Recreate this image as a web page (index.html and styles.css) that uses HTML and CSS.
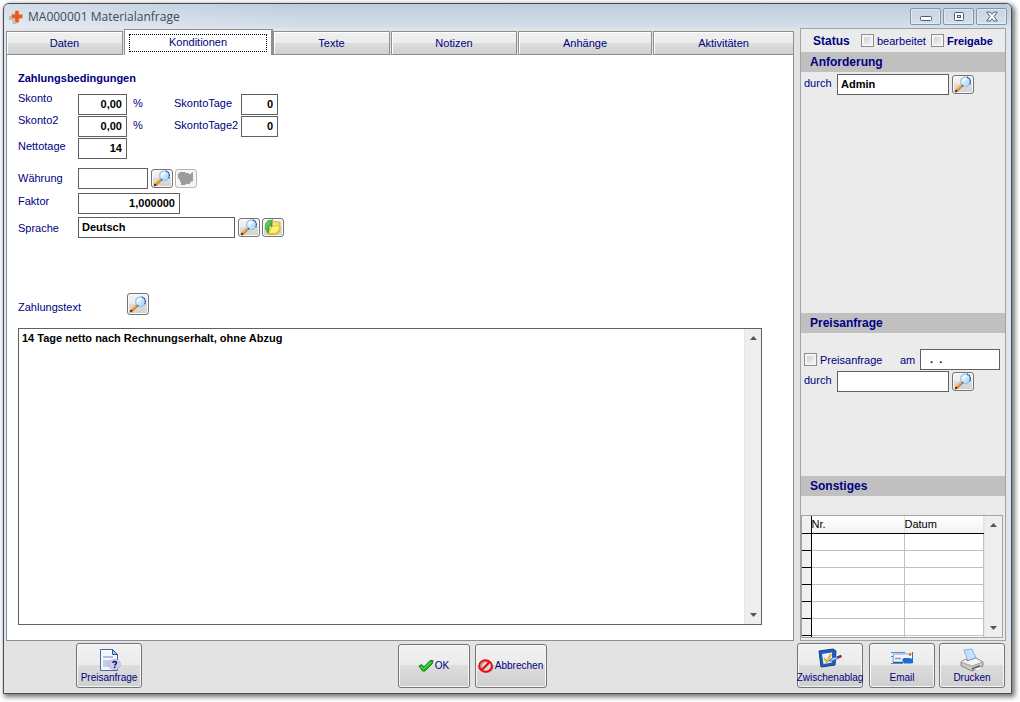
FILE: index.html
```html
<!DOCTYPE html>
<html lang="de">
<head>
<meta charset="utf-8">
<title>MA000001 Materialanfrage</title>
<link rel="stylesheet" href="styles.css">
</head>
<body>
<svg class="defs" aria-hidden="true">
  <defs>
    <linearGradient id="glass" x1="0" y1="0" x2="1" y2="1"><stop offset="0" stop-color="#fff"/><stop offset="1" stop-color="#8fd3f8"/></linearGradient>
    <linearGradient id="leaf" x1="0" y1="0" x2="1" y2="1"><stop offset="0" stop-color="#7be36b"/><stop offset="1" stop-color="#178f1c"/></linearGradient>
    <linearGradient id="gold" x1="0" y1="0" x2="1" y2="1"><stop offset="0" stop-color="#fff9a8"/><stop offset="1" stop-color="#f0c420"/></linearGradient>
    <symbol id="search" viewBox="0 0 18 17">
      <path d="M2.200 15 8 9.400" stroke="#c8702a" stroke-width="2.800" stroke-linecap="round"/>
      <path d="M2.600 14 7.600 9.200" stroke="#ffb23c" stroke-width="1.600"/>
      <path d="M1.400 15.600 2.800 14.400" stroke="#3a2410" stroke-width="1.800"/>
      <circle cx="11.500" cy="5.700" r="4.900" fill="url(#glass)" stroke="#9cc0e4" stroke-width="1.200"/>
      <path d="M13 1.100a4.900 4.900 0 0 1 2.400 7.600M8 9.200l1.600.9" fill="none" stroke="#27408f" stroke-width="1.200" stroke-dasharray="1.500 .8"/>
      <path d="M9.500 5.500c.2-1.500 1.300-2.400 2.800-2.400" fill="none" stroke="#fff" stroke-width="1.400"/>
    </symbol>
  </defs>
</svg>
<div class="window">
  <header class="titlebar">
    <svg class="app-icon" viewBox="0 0 14 14"><path d="M3.500 3h4v3h4v4h-4v4h-4v-4H0V6h3.500z" fill="#b9bec4"/><path d="M6 .5h4v3.700h3.700v4.300H10v4.200H6V8.500H2.500V4.200H6z" fill="#e8591c" stroke="#fbd0b6" stroke-width=".5"/></svg>
    <h1 class="title">MA000001 Materialanfrage</h1>
    <div class="window-controls">
      <button type="button" class="win-btn" aria-label="Minimieren"><svg viewBox="0 0 12 11"><rect x=".5" y="5.500" width="11" height="4" rx="1" fill="#fff" stroke="#555a62"/></svg></button>
      <button type="button" class="win-btn" aria-label="Maximieren"><svg viewBox="0 0 12 11"><rect x="1.500" y="1.500" width="9" height="8" rx="1" fill="#fff" stroke="#555a62"/><rect x="4.500" y="4.500" width="3" height="2" fill="#dce5ef" stroke="#555a62"/></svg></button>
      <button type="button" class="win-btn" aria-label="Schließen"><svg viewBox="0 0 12 11"><path d="M.8 1h3.400L6 3.200 7.800 1h3.400L8 5.500l3.200 4.500H7.800L6 7.800 4.200 10H.8L4 5.500z" fill="#fff" stroke="#555a62"/></svg></button>
    </div>
  </header>

  <div class="workspace">
    <main class="main">
      <div class="tabs" role="tablist">
        <button type="button" role="tab" class="tab">Daten</button>
        <button type="button" role="tab" class="tab tab-active" aria-selected="true"><span class="tab-focus">Konditionen</span></button>
        <button type="button" role="tab" class="tab">Texte</button>
        <button type="button" role="tab" class="tab">Notizen</button>
        <button type="button" role="tab" class="tab">Anhänge</button>
        <button type="button" role="tab" class="tab">Aktivitäten</button>
      </div>
      <section class="panel">
        <h2 class="heading">Zahlungsbedingungen</h2>
        <div class="group">
          <div class="row">
            <label class="label raised" for="skonto">Skonto</label>
            <input class="field num w-small" id="skonto" value="0,00">
            <span class="unit">%</span>
            <label class="label-days" for="tage">SkontoTage</label>
            <input class="field num w-days" id="tage" value="0">
          </div>
          <div class="row">
            <label class="label raised" for="skonto2">Skonto2</label>
            <input class="field num w-small" id="skonto2" value="0,00">
            <span class="unit">%</span>
            <label class="label-days" for="tage2">SkontoTage2</label>
            <input class="field num w-days" id="tage2" value="0">
          </div>
          <div class="row">
            <label class="label lifted" for="netto">Nettotage</label>
            <input class="field num w-small" id="netto" value="14">
          </div>
        </div>
        <div class="group group-wide">
          <div class="row">
            <label class="label level" for="waehrung">Währung</label>
            <input class="field w-currency" id="waehrung">
            <button type="button" class="icon-btn" aria-label="Währung suchen"><svg><use href="#search"/></svg></button>
            <button type="button" class="icon-btn" disabled aria-label="Währung übernehmen"><svg viewBox="0 0 18 17"><path d="M3 2h5l1 1h5l2-1v9l-3 1v2H9l-1 1H4v-3H3v-2L1 8V4z" fill="#9c9c9c"/><path d="M9 2.500h2M12 3.500h2M13 1.500h2" stroke="#fff"/></svg></button>
          </div>
          <div class="row">
            <label class="label lifted" for="faktor">Faktor</label>
            <input class="field num w-factor" id="faktor" value="1,000000">
          </div>
        </div>
        <div class="group group-near">
          <div class="row">
            <label class="label" for="sprache">Sprache</label>
            <input class="field w-language" id="sprache" value="Deutsch">
            <button type="button" class="icon-btn" aria-label="Sprache suchen"><svg><use href="#search"/></svg></button>
            <button type="button" class="icon-btn" aria-label="Sprache übernehmen"><svg viewBox="0 0 18 17"><path d="M8 4l3-2 1 1h4v9l-3 3-9 .5L3 11z" fill="url(#gold)" stroke="#c9a21a" stroke-width=".8"/><path d="M5 14.500 8 7h6l2 1-3 6z" fill="#fff27a" stroke="#d8b222" stroke-width=".6"/><path d="M9 1 4 1.500 1.500 5v5L4 14l1-3V7l1-1 2 2V1z" fill="url(#leaf)" stroke="#1c8a22" stroke-width=".6"/></svg></button>
          </div>
        </div>
        <div class="text-head">
          <label class="text-label" for="zahlungstext">Zahlungstext</label>
          <button type="button" class="icon-btn icon-btn-tall" aria-label="Zahlungstext suchen"><svg><use href="#search"/></svg></button>
        </div>
        <div class="memo">
          <textarea class="memo-text" id="zahlungstext">14 Tage netto nach Rechnungserhalt, ohne Abzug</textarea>
          <div class="scroll">
            <svg class="arrow" viewBox="0 0 7 4"><path d="M0 4 3.500 0 7 4z"/></svg>
            <svg class="arrow" viewBox="0 0 7 4"><path d="M0 0 3.500 4 7 0z"/></svg>
          </div>
        </div>
      </section>
    </main>

    <aside class="sidebar">
      <div class="status">
        <strong class="status-title">Status</strong>
        <input type="checkbox" class="check" id="bearbeitet"><label for="bearbeitet">bearbeitet</label>
        <input type="checkbox" class="check check-next" id="freigabe"><label class="bold" for="freigabe">Freigabe</label>
      </div>
      <section class="side-request">
        <h2 class="band">Anforderung</h2>
        <div class="side-row">
          <label class="side-label" for="durch">durch</label>
          <input class="field w-person" id="durch" value="Admin">
          <button type="button" class="icon-btn" aria-label="Person suchen"><svg><use href="#search"/></svg></button>
        </div>
      </section>
      <section class="side-price">
        <h2 class="band">Preisanfrage</h2>
        <div class="side-row side-row-date">
          <input type="checkbox" class="check" id="preis"><label for="preis">Preisanfrage</label>
          <label class="label-date" for="am">am</label>
          <input class="field w-date" id="am" value=" .  .">
        </div>
        <div class="side-row side-row-tight">
          <label class="side-label" for="durch2">durch</label>
          <input class="field w-person" id="durch2">
          <button type="button" class="icon-btn" aria-label="Person suchen"><svg><use href="#search"/></svg></button>
        </div>
      </section>
      <section class="side-other">
        <h2 class="band">Sonstiges</h2>
        <div class="grid">
          <table class="table">
            <colgroup><col class="col-mark"><col class="col-nr"><col class="col-date"></colgroup>
            <thead><tr><th class="mark"></th><th>Nr.</th><th>Datum</th></tr></thead>
            <tbody>
              <tr><td class="mark"></td><td></td><td></td></tr>
              <tr><td class="mark"></td><td></td><td></td></tr>
              <tr><td class="mark"></td><td></td><td></td></tr>
              <tr><td class="mark"></td><td></td><td></td></tr>
              <tr><td class="mark"></td><td></td><td></td></tr>
              <tr><td class="mark"></td><td></td><td></td></tr>
              <tr><td class="mark"></td><td></td><td></td></tr>
            </tbody>
          </table>
          <div class="scroll">
            <svg class="arrow" viewBox="0 0 7 4"><path d="M0 4 3.500 0 7 4z"/></svg>
            <svg class="arrow" viewBox="0 0 7 4"><path d="M0 0 3.500 4 7 0z"/></svg>
          </div>
        </div>
      </section>
    </aside>
  </div>

  <footer class="footer">
    <div class="actions">
      <button type="button" class="btn btn-stack">
        <svg class="ico" viewBox="0 0 24 24"><path d="M3.500 1.500h12l5 5v16h-17z" fill="#f4f8fe" stroke="#4a6a98"/><path d="M15.500 1.500v5h5z" fill="#9cc4ea" stroke="#2f5c92"/><path d="M6 9h10" stroke="#9aaed0" stroke-width="1.500"/><path d="M6 12h7v7H6z" fill="#c4cee6"/><ellipse cx="17.500" cy="16.500" rx="6" ry="5" fill="#cfcaf4" stroke="#b9b4e6"/><path d="M15.800 15c.2-2.200 3.700-2.100 3.600.1 0 1.200-1.700 1.200-1.700 2.500M17.700 18.600v1.400" fill="none" stroke="#16164a" stroke-width="1.500"/></svg>
        Preisanfrage</button>
    </div>
    <div class="actions actions-main">
      <button type="button" class="btn btn-wide">
        <svg class="ico-small" viewBox="0 0 16 14"><path d="M1 7 3.500 5.500 6 8 12 1.500h3L14.500 4.500 7 12H4.500z" fill="#1fb41f" stroke="#0f8a12"/><path d="M2.500 7.500 5.500 10 13 3" fill="none" stroke="#6de05c"/></svg>
        OK</button>
      <button type="button" class="btn btn-wide">
        <svg class="ico-small" viewBox="0 0 16 14"><ellipse cx="8.800" cy="7.800" rx="6" ry="5.300" fill="none" stroke="#9a9a9a" stroke-width="1.600"/><ellipse cx="7.500" cy="7" rx="6.300" ry="5.800" fill="none" stroke="#f00" stroke-width="1.900"/><path d="M4 11.500 12 3.500" stroke="#9a9a9a" stroke-width="1.500"/><path d="M3.500 11 11.500 3" stroke="#f00" stroke-width="1.900"/></svg>
        Abbrechen</button>
    </div>
    <div class="actions actions-end">
      <button type="button" class="btn btn-stack btn-first">
        <svg class="ico" viewBox="0 0 24 24"><path d="M1 3 15 1l3 2-1 14-14 2z" fill="#1f5fb8" stroke="#123f86"/><path d="M4 6 14 4.500v10L5.500 16z" fill="#e6f2ff"/><path d="M6 10l3 4 4-8" fill="none" stroke="#f0a818" stroke-width="1.800"/><path d="M11 13l3-3 6-1.500v2L14 13z" fill="#a8d4ff" stroke="#2c74cc"/><path d="M19.500 9.500 23.500 8" stroke="#8c2f3c" stroke-width="2.500"/></svg>
        Zwischenablag</button>
      <button type="button" class="btn btn-stack btn-mid">
        <svg class="ico" viewBox="0 0 24 24"><path d="M1 4.500h14M1 8.500h5M1 15.500h12" stroke="#5c8cc8"/><path d="M3.500 6H22.500v8H3z" fill="#f2f7fd" stroke="#7ea2d0"/><path d="M22.500 4v10" stroke="#3a6cb4"/><path d="M5 10.500h6" stroke="#8a98ac" stroke-width="1.500"/><path d="M12 11.500l2-1.500h5l4 1v4l-2 .5h-7z" fill="#1f6cd0"/><rect x="19" y="5" width="2" height="3" fill="#e87830"/><path d="M3 14.500h10" stroke="#2660ac"/></svg>
        Email</button>
      <button type="button" class="btn btn-stack">
        <svg class="ico" viewBox="0 0 24 24"><path d="M4 2l8-1 4 9-8 3z" fill="#c4e0ff" stroke="#6aa6ea" stroke-width=".8"/><path d="M1 14l5-3 1 2 9-3 7 4v4l-11 5L1 18z" fill="#c8c8c8" stroke="#747474" stroke-width=".8"/><path d="M1 14l11 4 11-4-7-4-9 3-1-2z" fill="#f4f4f4" stroke="#8a8a8a" stroke-width=".7"/><path d="M12 20l8-3v2l-8 3z" fill="#606060"/><path d="M14 21l6-2 3 1-6 2.500z" fill="#fff" stroke="#aaa" stroke-width=".4"/></svg>
        Drucken</button>
    </div>
  </footer>
</div>
</body>
</html>
```
FILE: styles.css
```css
* { box-sizing: border-box; }

body {
  margin: 0;
  background: #fff;
  color: #000080;
  font: 11px/12px "Liberation Sans", Arial, sans-serif;
}

button, input, textarea { margin: 0; padding: 0; font: inherit; color: inherit; }
h1, h2 { margin: 0; font-size: inherit; }
.defs { position: absolute; width: 0; height: 0; }
.bold { font-weight: bold; }

.window {
  display: flex;
  flex-direction: column;
  min-height: calc(100vh - 11px);
  margin: 3px 8px 8px 3px;
  border: 1px solid #4a4e54;
  border-radius: 6px 6px 0 0;
  background: #e3e3e3;
  box-shadow: 2px 2px 5px 1px rgba(0, 0, 0, .55);
}

/* Title bar */
.titlebar {
  display: flex;
  align-items: center;
  height: 24px;
  padding: 1px 4px 0 5px;
  border-radius: 5px 5px 0 0;
  background: linear-gradient(90deg, rgba(255, 255, 255, .35), rgba(255, 255, 255, 0) 30%), linear-gradient(#bccbdc, #d5e0ec);
}
.app-icon { width: 14px; height: 14px; margin-right: 5px; }
.title { padding-top: 1px; font: 12px/16px "Open Sans", "Noto Sans", sans-serif; color: #414a55; }
.window-controls { display: flex; gap: 2px; margin-left: auto; }
.win-btn {
  display: grid;
  place-items: center;
  width: 31px;
  height: 17px;
  border: 1px solid #8494ac;
  border-radius: 2px;
  background: linear-gradient(#c8d5e4, #d3dfec);
  box-shadow: inset 0 0 0 1px rgba(255, 255, 255, .4);
}
.win-btn svg { width: 12px; height: 11px; }

.workspace {
  display: grid;
  grid-template-columns: 1fr 206px;
  gap: 6px;
  flex: 1;
  padding-right: 1px;
  border: solid #dce6f1;
  border-width: 0 4px 0 2px;
}

/* Tabs */
.main { display: flex; flex-direction: column; padding-top: 1px; }
.tabs {
  display: grid;
  grid-template-columns: 118fr 149fr 118fr 127fr 135fr 141fr;
  align-items: end;
  height: 26px;
}
.tab {
  height: 24px;
  margin-right: 1px;
  border: 1px solid #8c8e98;
  background: linear-gradient(#f1f1f1, #ebebeb 50%, #dddddd 50%, #d0d0d0);
  box-shadow: inset 1px 1px 0 #fff;
}
.tab:last-child { margin-right: 0; }
.tab-active {
  height: 26px;
  margin-right: 0;
  padding: 1px 4px 0;
  border-right-width: 2px;
  border-bottom: 0;
  background: #fff;
}
.tab-focus { display: block; height: 18px; border: 1px dotted #000; line-height: 15px; }

.panel {
  display: flex;
  flex-direction: column;
  flex: 1;
  padding: 17px 31px 15px 11px;
  border: 1px solid #8c8e98;
  border-top: 0;
  background: #fff;
}
.heading { line-height: 13px; }

/* Form rows */
.group { display: flex; flex-direction: column; gap: 1px; margin-top: 9px; }
.group-wide { gap: 4px; }
.group-near { margin-top: 3px; }
.row { display: flex; align-items: center; height: 21px; }
.label { width: 60px; }
.level { padding-bottom: 2px; }
.raised { padding-bottom: 14px; }
.lifted { padding-bottom: 6px; }
.unit { width: 47px; padding: 0 0 3px 6px; }
.label-days { width: 67px; padding-bottom: 3px; }

.field {
  height: 21px;
  padding: 0 3px 2px;
  border: 1px solid #5f5f5f;
  background: #fff;
  color: #000;
  font-weight: bold;
}
.num { padding-right: 4px; text-align: right; }
.w-small { width: 49px; }
.w-days { width: 37px; }
.w-currency { width: 70px; }
.w-factor { width: 102px; }
.w-language { width: 157px; }
.w-person { width: 112px; }
.w-date { width: 80px; padding-left: 6px; white-space: pre; }

.icon-btn {
  display: grid;
  place-items: center;
  width: 22px;
  height: 19px;
  margin-left: 2px;
  border: 1px solid #747474;
  border-radius: 3px;
  background: linear-gradient(#f4f4f4, #ececec 50%, #dedede 50%, #d2d2d2);
  box-shadow: inset 0 0 0 1px #fafafa;
}
.field + .icon-btn { margin-left: 3px; }
.icon-btn:disabled { border-color: #b4b4b4; background: #f2f2f2; }
.icon-btn svg { width: 18px; height: 17px; }
.icon-btn-tall { height: 22px; }

.text-head { display: flex; align-items: center; margin-top: 55px; }
.text-label { width: 107px; padding-top: 6px; }

.memo {
  display: flex;
  flex: 1;
  min-height: 120px;
  margin-top: 13px;
  border: 1px solid #5f5f5f;
}
.memo-text {
  flex: 1;
  padding: 3px;
  border: 0;
  outline: 0;
  resize: none;
  overflow: hidden;
  background: #fff;
  color: #000;
  font-weight: bold;
}
.scroll {
  display: flex;
  flex-direction: column;
  align-items: center;
  justify-content: space-between;
  width: 17px;
  padding: 7px 0;
  border-left: 1px solid #e6e6e6;
  background: #eeeeee;
}
.arrow { width: 7px; height: 4px; fill: #555; }

/* Sidebar */
.sidebar {
  display: flex;
  flex-direction: column;
  border: 1px solid #a0a3a8;
  background: #ebebeb;
}
.status { display: flex; align-items: center; height: 23px; padding-left: 12px; }
.status-title { width: 48px; font-size: 12px; }
.check {
  appearance: none;
  width: 13px;
  height: 13px;
  margin-right: 3px;
  border: 1px solid #8e8f8f;
  background: linear-gradient(135deg, #c9ced4, #f6f6f6);
  box-shadow: inset 0 0 0 2px #f4f4f4;
}
.check-next { margin-left: 5px; }
.band { height: 20px; padding-left: 9px; background: #c0c0c0; font-size: 12px; line-height: 21px; }
.side-request { flex: 261; }
.side-price { flex: 163; }
.side-row { display: flex; align-items: center; height: 21px; margin-top: 2px; padding-left: 3px; }
.side-row-date { margin-top: 16px; }
.side-row-tight { margin-top: 1px; }
.side-label { width: 33px; padding-bottom: 3px; }
.label-date { width: 20px; margin-left: auto; }
.side-row-date .w-date { margin-right: 5px; }

.grid {
  display: flex;
  height: 123px;
  margin: 19px 2px 2px 0;
  border: 1px solid #a0a3a8;
  overflow: hidden;
}
.grid .scroll { width: 18px; }
.table { flex: 1; height: 122px; border-collapse: collapse; table-layout: fixed; background: #fff; color: #000; }
.col-mark { width: 9px; }
.col-nr { width: 93px; }
.table th, .table td { height: 17px; padding: 0; border: 1px solid #c0c0c0; }
.table th {
  border-width: 0 1px 1px 0;
  border-bottom-color: #000;
  border-right-color: #e4e4e4;
  background: linear-gradient(#fff, #f1f2f4);
  font-weight: normal;
  text-align: left;
}
.table .mark { border-right-color: #000; border-bottom-color: #000; border-left: 0; background: #f0f0f0; }

/* Footer */
.footer {
  display: grid;
  grid-template-columns: 392fr 401fr auto;
  padding: 2px 5px 4px 2px;
  border: solid #dce6f1;
  border-width: 0 1px 1px;
}
.actions { display: flex; padding-left: 69px; }
.actions-main { gap: 5px; padding: 1px 0 0 0; }
.actions-end { padding: 0; }
.btn {
  display: flex;
  align-items: center;
  justify-content: center;
  width: 66px;
  height: 45px;
  border: 1px solid #747474;
  border-radius: 3px;
  background: linear-gradient(#f2f2f2, #ebebeb 48%, #dddddd 48%, #cfcfcf);
  box-shadow: inset 0 0 0 1px #f6f6f6;
  font-size: 10px;
  white-space: nowrap;
}
.btn-stack { flex-direction: column; padding-top: 1px; }
.btn-wide { width: 72px; height: 44px; }
.btn-first { margin-right: 6px; }
.btn-mid { margin-right: 4px; }
.ico { width: 24px; height: 24px; flex: none; }
.ico-small { width: 16px; height: 14px; flex: none; margin-right: 1px; }
```
